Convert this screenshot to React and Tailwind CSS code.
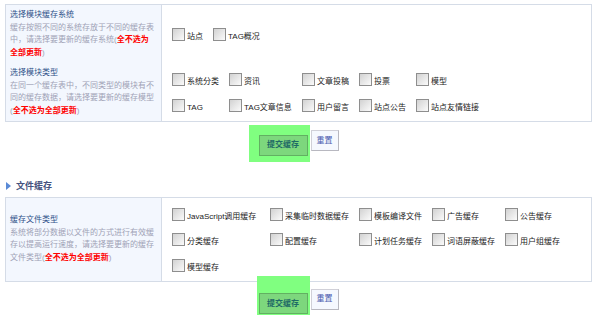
const FONT = "font-['Liberation_Sans','Noto_Sans_CJK_SC',sans-serif]"

const systemRow = ['站点', 'TAG概况']
const typeRows = [
  '系统分类', '资讯', '文章投稿', '投票', '模型',
  'TAG', 'TAG文章信息', '用户留言', '站点公告', '站点友情链接',
]
const fileTypes = [
  'JavaScript调用缓存', '采集临时数据缓存', '模板编译文件', '广告缓存', '公告缓存',
  '分类缓存', '配置缓存', '计划任务缓存', '词语屏蔽缓存', '用户组缓存',
  '模型缓存',
]

function Box({ label }) {
  return (
    <label className="flex items-end gap-[2px] whitespace-nowrap">
      <span className="w-[13px] h-[13px] shrink-0 border border-[#8e8e8e] bg-linear-to-br from-[#d2d2d2] to-[#fbfbfb]" />
      <span className="text-[8px] leading-none text-[#222]">{label}</span>
    </label>
  )
}

function Note({ title, children }) {
  return (
    <div className="text-[8px] leading-[12.5px]">
      <p className="text-[#2d5088]">{title}</p>
      <p className="text-[#9fa2b6]">
        {children}(<b className="text-[#ff0000] leading-[12.5px]">全不选为全部更新</b>)
      </p>
    </div>
  )
}

function Buttons({ glow }) {
  return (
    <div className="flex justify-center gap-[3px]">
      <div className="relative">
        <div className={`absolute bg-[#80ff80] ${glow}`} />
        <button className="relative w-[49px] h-[21px] border border-[#62b062] bg-[#7dd77d] text-[8px] font-bold text-[#1f6a66]">
          提交缓存
        </button>
      </div>
      <button className="w-[28px] h-[21px] border border-[#d0d0d8] border-r-[#b8b8c0] border-b-[#b8b8c0] bg-[#f5f8fe] text-[8px] text-[#4c5cb0]">
        重置
      </button>
    </div>
  )
}

export default function App() {
  return (
    <div className={`w-[599px] h-[321px] bg-white px-[5px] pt-[4px] ${FONT}`}>
      <div className="w-[587px]">
        {/* Cache systems / module types */}
        <div className="grid grid-cols-[156px_1fr] border border-[#d5dce7]">
          <div className="bg-[#f3f7fe] border-r border-[#d5dce7] pl-[4px] pr-[6px] py-[4px]">
            <Note title="选择模块缓存系统">缓存按照不同的系统存放于不同的缓存表中，请选择要更新的缓存系统</Note>
          </div>
          <div className="flex items-center pl-[10px]">
            <div className="grid grid-cols-[41px_auto]">
              {systemRow.map(l => <Box key={l} label={l} />)}
            </div>
          </div>
          <div className="bg-[#f3f7fe] border-r border-[#d5dce7] pl-[4px] pr-[6px] py-[4px]">
            <Note title="选择模块类型">在同一个缓存表中，不同类型的模块有不同的缓存数据，请选择要更新的缓存模型</Note>
          </div>
          <div className="flex items-center pl-[10px]">
            <div className="grid grid-cols-[57px_73px_57px_57px_auto] gap-y-[13px]">
              {typeRows.map(l => <Box key={l} label={l} />)}
            </div>
          </div>
        </div>

        <div className="mt-[8px]">
          <Buttons glow="-left-[10px] -right-[2px] -top-[5px] -bottom-[6px]" />
        </div>

        {/* File cache */}
        <h2 className="mt-[24px] mb-[5px] flex items-center gap-[5px] text-[9px] leading-[12px] font-bold text-[#46527e]">
          <svg width="5" height="8" viewBox="0 0 5 8" className="ml-[1px]">
            <path d="M0 0 L5 4 L0 8 Z" fill="#5a8ad6" />
          </svg>
          文件缓存
        </h2>

        <div className="grid grid-cols-[156px_1fr] border border-[#d5dce7]">
          <div className="flex items-center bg-[#f3f7fe] border-r border-[#d5dce7] pl-[4px] pr-[6px]">
            <Note title="缓存文件类型">系统将部分数据以文件的方式进行有效缓存以提高运行速度，请选择要更新的缓存文件类型</Note>
          </div>
          <div className="pl-[10px] pt-[10px] pb-[9px]">
            <div className="grid grid-cols-[98px_89px_73px_73px_auto] gap-y-[12.5px]">
              {fileTypes.map(l => <Box key={l} label={l} />)}
            </div>
          </div>
        </div>

        <div className="mt-[7px]">
          <Buttons glow="-left-[2px] -right-[2px] -top-[13px] -bottom-[1px]" />
        </div>
      </div>
    </div>
  )
}
